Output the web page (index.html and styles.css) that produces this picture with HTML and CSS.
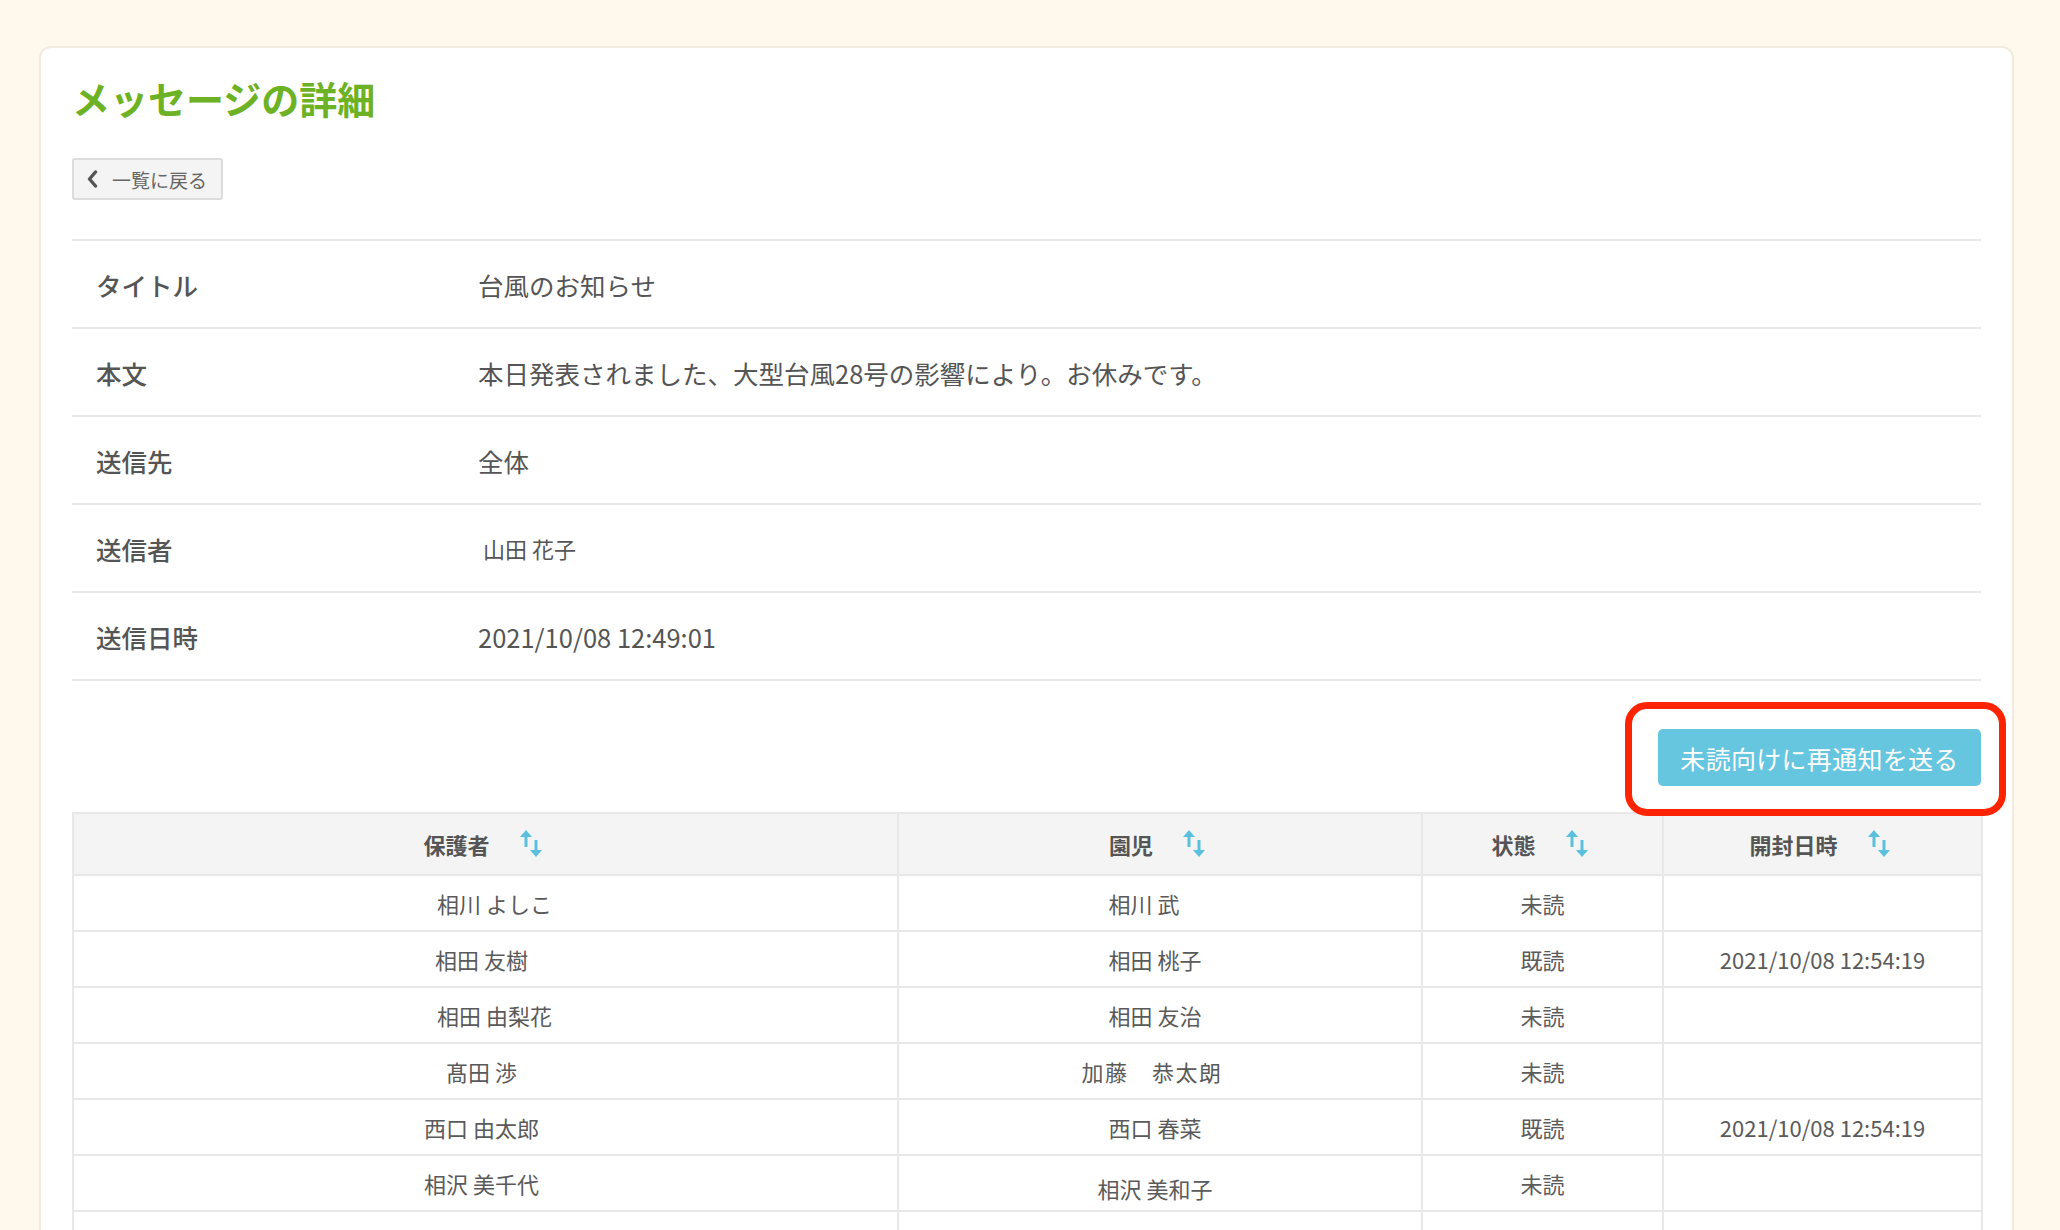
FILE: index.html
```html
<!DOCTYPE html>
<html lang="ja">
<head>
<meta charset="utf-8">
<title>メッセージの詳細</title>
<link rel="stylesheet" href="styles.css">
</head>
<body>
<div class="card">
  <h1 class="page-title">メッセージの詳細</h1>
  <button class="back-btn" type="button">
    <svg class="chev" width="11" height="18" viewBox="0 0 11 18"><polyline points="8.5,2 2.5,9 8.5,16" fill="none" stroke="#555" stroke-width="3.4" stroke-linecap="round" stroke-linejoin="round"/></svg>
    <span>一覧に戻る</span>
  </button>

  <div class="info">
    <div class="info-row"><div class="info-label">タイトル</div><div class="info-value">台風のお知らせ</div></div>
    <div class="info-row"><div class="info-label">本文</div><div class="info-value">本日発表されました、大型台風28号の影響により。お休みです。</div></div>
    <div class="info-row"><div class="info-label">送信先</div><div class="info-value">全体</div></div>
    <div class="info-row"><div class="info-label">送信者</div><div class="info-value small">山田 花子</div></div>
    <div class="info-row"><div class="info-label">送信日時</div><div class="info-value">2021/10/08 12:49:01</div></div>
  </div>

  <div class="actions">
    <div class="notify-wrap">
      <button class="notify-btn" type="button">未読向けに再通知を送る</button>
      <span class="highlight"></span>
    </div>
  </div>

  <table class="list">
    <colgroup>
      <col class="c1"><col class="c2"><col class="c3"><col class="c4">
    </colgroup>
    <thead>
      <tr>
        <th><span class="th-in">保護者<svg class="sort" width="22" height="28" viewBox="0 0 22 28"><rect x="4.5" y="5" width="3" height="12" fill="#5bc0de"/><polygon points="0,7 6,0 12,7" fill="#5bc0de"/><rect x="14.5" y="10" width="3" height="12" fill="#5bc0de"/><polygon points="10,20 16,27 22,20" fill="#5bc0de"/></svg></span></th>
        <th><span class="th-in">園児<svg class="sort" width="22" height="28" viewBox="0 0 22 28"><rect x="4.5" y="5" width="3" height="12" fill="#5bc0de"/><polygon points="0,7 6,0 12,7" fill="#5bc0de"/><rect x="14.5" y="10" width="3" height="12" fill="#5bc0de"/><polygon points="10,20 16,27 22,20" fill="#5bc0de"/></svg></span></th>
        <th><span class="th-in">状態<svg class="sort" width="22" height="28" viewBox="0 0 22 28"><rect x="4.5" y="5" width="3" height="12" fill="#5bc0de"/><polygon points="0,7 6,0 12,7" fill="#5bc0de"/><rect x="14.5" y="10" width="3" height="12" fill="#5bc0de"/><polygon points="10,20 16,27 22,20" fill="#5bc0de"/></svg></span></th>
        <th><span class="th-in">開封日時<svg class="sort" width="22" height="28" viewBox="0 0 22 28"><rect x="4.5" y="5" width="3" height="12" fill="#5bc0de"/><polygon points="0,7 6,0 12,7" fill="#5bc0de"/><rect x="14.5" y="10" width="3" height="12" fill="#5bc0de"/><polygon points="10,20 16,27 22,20" fill="#5bc0de"/></svg></span></th>
      </tr>
    </thead>
    <tbody>
      <tr><td><span class="shift-r">相川 よしこ</span></td><td><span class="shift-l">相川 武</span></td><td>未読</td><td></td></tr>
      <tr><td>相田 友樹</td><td>相田 桃子</td><td>既読</td><td>2021/10/08 12:54:19</td></tr>
      <tr><td><span class="shift-r">相田 由梨花</span></td><td>相田 友治</td><td>未読</td><td></td></tr>
      <tr><td>髙田 渉</td><td><span class="wide">加藤　恭太朗</span></td><td>未読</td><td></td></tr>
      <tr><td>西口 由太郎</td><td>西口 春菜</td><td>既読</td><td>2021/10/08 12:54:19</td></tr>
      <tr><td>相沢 美千代</td><td><span class="shift-d">相沢 美和子</span></td><td>未読</td><td></td></tr>
      <tr><td></td><td></td><td></td><td></td></tr>
    </tbody>
  </table>
</div>
</body>
</html>
```
FILE: styles.css
```css
html, body {
  margin: 0;
  padding: 0;
}
body {
  background: #fef9ec;
  font-family: "Noto Sans CJK JP", "Noto Sans", sans-serif;
  color: #555;
}
.card {
  margin: 46px 44px 0 39px;
  width: 1975px;
  box-sizing: border-box;
  background: #fff;
  border: 2px solid #f1ecdf;
  border-radius: 12px;
  padding: 28px 31px 40px 31px;
}
.page-title {
  margin: 0;
  font-size: 38px;
  line-height: 44px;
  font-weight: 700;
  color: #6db225;
}
.back-btn {
  margin-top: 38px;
  display: flex;
  align-items: center;
  gap: 14px;
  height: 42px;
  width: 151px;
  box-sizing: border-box;
  padding: 0 8px 0 13px;
  background: #f4f4f4;
  border: 2px solid #dcdcdc;
  border-radius: 3px;
  font-family: inherit;
  font-size: 19px;
  color: #666;
  white-space: nowrap;
}
.chev {
  flex: none;
}
.info {
  margin-top: 39px;
  border-top: 2px solid #e8e8e8;
}
.info-row {
  display: flex;
  align-items: center;
  height: 88px;
  box-sizing: border-box;
  border-bottom: 2px solid #e8e8e8;
  font-size: 25.5px;
}
.info-label {
  width: 406px;
  flex: none;
  box-sizing: border-box;
  padding-left: 24px;
  font-weight: 500;
  color: #555;
}
.info-value {
  color: #555;
}
.info-value.small {
  font-size: 22px;
  padding-left: 5px;
}
.actions {
  display: flex;
  justify-content: flex-end;
  margin-top: 48px;
}
.notify-wrap {
  position: relative;
}
.notify-btn {
  display: block;
  width: 323px;
  height: 57px;
  border: none;
  border-radius: 5px;
  background: #66c5df;
  color: #fff;
  font-family: inherit;
  font-size: 25px;
  letter-spacing: 0.3px;
}
.highlight {
  position: absolute;
  left: -33px;
  right: -25px;
  top: -27px;
  bottom: -30px;
  border: 7px solid #ff2400;
  border-radius: 22px;
  pointer-events: none;
}
.list {
  margin-top: 26px;
  width: 1909px;
  border-collapse: collapse;
  table-layout: fixed;
  font-size: 22px;
}
.c1 { width: 825px; }
.c2 { width: 524px; }
.c3 { width: 241px; }
.c4 { width: 319px; }
.list th, .list td {
  border: 2px solid #e8e8e8;
  text-align: center;
  padding: 0;
}
.list th {
  height: 60px;
  background: #f4f4f4;
  font-weight: 700;
  color: #555;
  padding-right: 6px;
}
.th-in {
  display: inline-flex;
  align-items: center;
  gap: 30px;
}
.sort {
  display: block;
}
.list td {
  height: 54px;
  color: #5a5a5a;
}
.list td:nth-child(1) {
  padding-right: 8px;
}
.list td:nth-child(2) {
  padding-right: 10px;
}
.shift-r {
  padding-left: 26px;
}
.shift-l {
  padding-right: 22px;
}
.wide {
  letter-spacing: 1.5px;
  padding-right: 6px;
}
.shift-d {
  position: relative;
  top: 5px;
}
```
